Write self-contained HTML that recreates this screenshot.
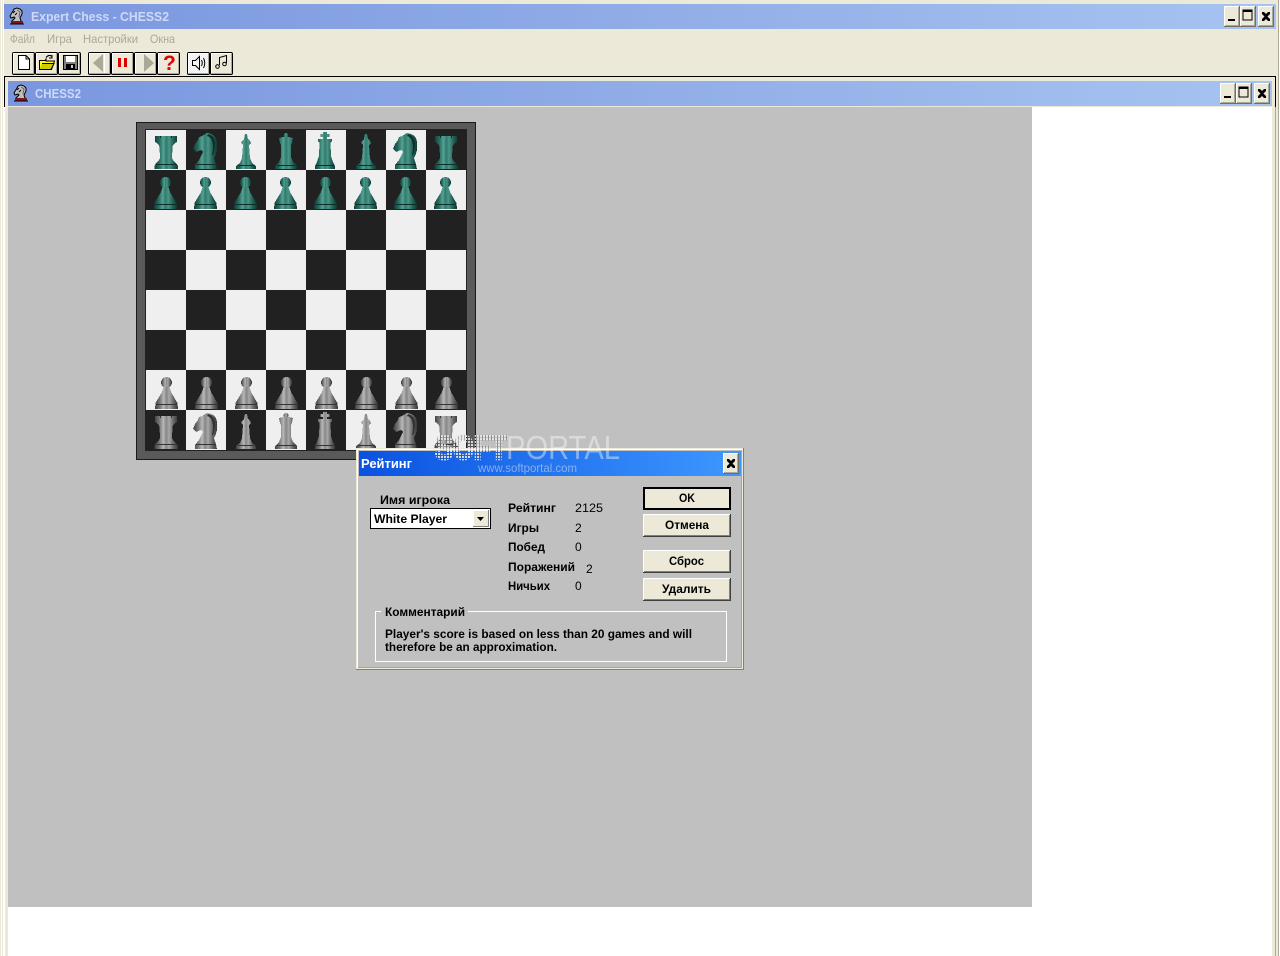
<!DOCTYPE html>
<html lang="ru"><head><meta charset="utf-8"><title>Expert Chess - CHESS2</title>
<style>
html,body{margin:0;padding:0;background:#fff;width:1280px;height:956px;overflow:hidden}
svg{display:block;position:absolute;left:0;top:0}
text{font-family:"Liberation Sans",sans-serif;font-size:12px;font-weight:bold;fill:#000;white-space:pre}
.m{font-weight:normal;fill:#aca899;font-size:12px}
.t{fill:#cdd9f6;font-size:13px}
.pc{shape-rendering:crispEdges}
</style></head><body>
<svg width="1280" height="956" viewBox="0 0 1280 956" xmlns="http://www.w3.org/2000/svg">
<defs>
<linearGradient id="tb"><stop offset="0" stop-color="#7a96df"/><stop offset="1" stop-color="#a6c4f0"/></linearGradient>
<linearGradient id="dlg"><stop offset="0" stop-color="#0a52e0"/><stop offset="1" stop-color="#3e98ff"/></linearGradient>
<linearGradient id="g"><stop offset="0" stop-color="#123f38"/><stop offset=".2" stop-color="#246a5e"/><stop offset=".38" stop-color="#55a294"/><stop offset=".5" stop-color="#2f7a6d"/><stop offset=".62" stop-color="#4c9586"/><stop offset=".82" stop-color="#205f54"/><stop offset="1" stop-color="#0f3a33"/></linearGradient>
<linearGradient id="s"><stop offset="0" stop-color="#404040"/><stop offset=".2" stop-color="#747474"/><stop offset=".38" stop-color="#b8b8b8"/><stop offset=".5" stop-color="#868686"/><stop offset=".62" stop-color="#a8a8a8"/><stop offset=".82" stop-color="#626262"/><stop offset="1" stop-color="#383838"/></linearGradient>
<pattern id="sq" width="80" height="80" patternUnits="userSpaceOnUse" x="146" y="130"><rect width="80" height="80" fill="#efefef"/><rect x="40" width="40" height="40" fill="#212121"/><rect y="40" width="40" height="40" fill="#212121"/></pattern>
<pattern id="dots" width="3" height="3" patternUnits="userSpaceOnUse"><rect width="2" height="2" fill="#e8e8e8" fill-opacity=".85"/><rect x="2" width="1" height="3" fill="#555" fill-opacity=".3"/></pattern>
<pattern id="dith" width="2" height="2" patternUnits="userSpaceOnUse"><rect width="2" height="2" fill="#ece9d8"/><rect width="1" height="1" fill="#fff"/><rect x="1" y="1" width="1" height="1" fill="#fff"/></pattern>

<g id="rook" class="pc"><path d="M9 6H31V12Q27 14 26.500 17L26 28Q27 31 30 33L32 36V39H8.500V36L10 33Q13 31 14 28L13.500 17Q13 14 9 12Z"/><rect x="14" y="6" width="1" height="2" fill="currentColor"/><rect x="25" y="6" width="1" height="2" fill="currentColor"/><rect x="10" y="34" width="21" height="1" fill="currentColor"/></g>
<g id="knight" class="pc"><path d="M21 3Q30 4 31 12Q32 22 28 28L30 34L31 39H9V35L13 30L17 22L15 20L10 22L7 19L9 14L12 10L13 7L16 6Z"/><path d="M22 4Q29 6 29 14Q29 20 27 25L26 25Q28 17 26 11Q25 7 21 6Z" fill="currentColor"/><rect x="10" y="34" width="20" height="1" fill="currentColor"/></g>
<g id="bishop" class="pc"><path d="M19 4H21L22 9L24 11L25 13L23 15L24 28L26 33L30 36V39H10V36L14 33L16 28L17 15L15 13L16 11L18 9Z"/><rect x="12" y="35" width="16" height="1" fill="currentColor"/></g>
<g id="queen" class="pc"><circle cx="20" cy="5.500" r="2.500"/><path d="M13 8L17 7H23L27 8L26 13L25 15V27L27 32L31 36V39H9V36L13 32L15 27V15L14 13Z"/><rect x="11" y="35" width="18" height="1" fill="currentColor"/></g>
<g id="king" class="pc"><path d="M17 2H21V4H23.500V7H21V9H26V11L24.500 13L25 26L27 32L29 36V39H9V36L11 32L13 26L13.500 13L12 11V9H17V7H14.500V4H17Z"/><rect x="10" y="35" width="18" height="1" fill="currentColor"/></g>
<g id="pawn" class="pc"><circle cx="19.500" cy="12.500" r="5.500"/><path d="M16.500 17H22.500L24 22L27.500 28L30.500 33L31 39H8L8.500 33L11.500 28L15 22Z"/><rect x="9" y="34" width="21" height="1" fill="currentColor"/></g>

<g id="b"><rect width="23" height="23" rx="2" fill="#000"/><rect x="1" y="1" width="21" height="21" fill="#aca899"/><rect x="1" y="1" width="20" height="20" fill="#fff"/><rect x="2" y="2" width="19" height="19" fill="#ece9d8"/></g>
<g id="w"><rect width="16" height="21" fill="#716f64"/><rect width="15" height="20" fill="#fff"/><rect x="1" y="1" width="14" height="19" fill="#aca899"/><rect x="1" y="1" width="13" height="18" fill="#ece9d8"/></g>
<g id="wmin"><use href="#w"/><rect x="4" y="13" width="7" height="2" fill="#000"/></g>
<g id="wmax"><use href="#w"/><rect x="3" y="4" width="9" height="10" fill="none" stroke="#000"/><rect x="3" y="4" width="9" height="2" fill="#000"/></g>
<g id="x"><path d="M4 0H6L8 2 10 0H12V2L9.500 4.500 12 7V9H10L8 7 6 9H4V7L6.500 4.500 4 2Z" fill="#000"/></g>
<g id="wcl"><use href="#w"/><use href="#x" y="6"/></g>
<g id="kn"><path d="M3 15V13L6 10 5 9 2 10 1 8 4 3 5 1 8 0 11 1 13 3 13 6 11 10 12 13 13 15Z" fill="#c0c0c0" stroke="#000" stroke-width="1"/><path d="M8 2L11 4 10 9" stroke="#606060" fill="none"/><path d="M6 3L4 5M8 5L6 7" stroke="#000" fill="none"/><rect x="2" y="13" width="12" height="3" fill="#7a1820"/><rect x="1" y="15.500" width="14" height="1" fill="#000"/></g>
<g id="dbtn"><rect width="88" height="23" fill="#404040"/><rect width="87" height="22" fill="#fff"/><rect x="1" y="1" width="86" height="21" fill="#808080"/><rect x="1" y="1" width="85" height="20" fill="#ece9d8"/></g>
</defs>

<!-- outer window frame -->
<rect width="1280" height="956" fill="#ece9d8"/>
<rect x="1279" width="1" height="956" fill="#fff"/>
<rect x="1278" width="1" height="956" fill="#aca899"/>
<rect x="1" y="0" width="1" height="956" fill="#fff"/>
<rect x="3" y="0" width="1" height="956" fill="#fff"/>
<rect x="4" y="4" width="1272" height="25" fill="url(#tb)"/>
<use href="#kn" x="9" y="8"/>
<text class="t" x="31" y="21" textLength="138" lengthAdjust="spacingAndGlyphs">Expert Chess - CHESS2</text>
<use href="#wmin" x="1224" y="6"/><use href="#wmax" x="1240" y="6"/><use href="#wcl" x="1258" y="6"/>

<!-- menu -->
<text class="m" x="10" y="43" textLength="25" lengthAdjust="spacingAndGlyphs">Файл</text>
<text class="m" x="47" y="43" textLength="25" lengthAdjust="spacingAndGlyphs">Игра</text>
<text class="m" x="83" y="43" textLength="55" lengthAdjust="spacingAndGlyphs">Настройки</text>
<text class="m" x="150" y="43" textLength="25" lengthAdjust="spacingAndGlyphs">Окна</text>

<!-- toolbar -->
<use href="#b" x="12" y="52"/><use href="#b" x="35" y="52"/><use href="#b" x="58" y="52"/>
<use href="#b" x="88" y="52"/><use href="#b" x="111" y="52"/><use href="#b" x="134" y="52"/><use href="#b" x="157" y="52"/>
<use href="#b" x="187" y="52"/><use href="#b" x="210" y="52"/>
<rect x="189" y="54" width="19" height="19" fill="url(#dith)"/>
<!-- new -->
<path d="M18.500 55.500H26L29.500 59V69.500H18.500Z" fill="#fff" stroke="#000"/><path d="M26 55.500V59H29.500" fill="none" stroke="#000"/>
<!-- open -->
<path d="M39.500 60.500H45L46 59V61H54.500L51.500 69.500H39.500Z" fill="#ffff00" stroke="#000"/><path d="M42 63.500H54L51 69.500H39.500" fill="#cccc00" stroke="#000"/><path d="M46 57.500Q49 54 52 56.500M52 55V58H49" fill="none" stroke="#000"/>
<!-- save -->
<rect x="63.500" y="55.500" width="14" height="14" fill="#808080" stroke="#000"/><rect x="66" y="56" width="9" height="6" fill="#fff"/><rect x="66" y="64" width="9" height="5" fill="#000"/><rect x="71" y="65" width="2" height="3" fill="#ccc"/>
<!-- back / pause / forward / help -->
<path d="M93 63L103 54V72Z" fill="#aca899"/><rect x="104" y="54" width="1" height="19" fill="#fff"/>
<rect x="118" y="58" width="3" height="9" fill="#e00000"/><rect x="124" y="58" width="3" height="9" fill="#e00000"/>
<path d="M154 63L144 54V72Z" fill="#aca899"/>
<text x="163" y="70" style="font-size:21px;fill:#e00000">?</text>
<!-- speaker -->
<path d="M192.500 60.500H195.500L199.500 56.500V69.500L195.500 65.500H192.500Z" fill="none" stroke="#000"/><path d="M201.500 60Q203 63 201.500 66M203.500 58Q206 63 203.500 68" fill="none" stroke="#000"/>
<!-- note -->
<path d="M219.500 65V57.500L226.500 55.500V63" fill="none" stroke="#000"/><circle cx="217.500" cy="66.500" r="1.800" fill="none" stroke="#000"/><circle cx="224.500" cy="64" r="1.800" fill="none" stroke="#000"/>

<!-- MDI area -->
<rect x="4" y="76" width="1272" height="880" fill="#fff"/>
<rect x="4" y="76" width="1272" height="1" fill="#000"/>
<rect x="4" y="76" width="1" height="31" fill="#000"/>
<rect x="1275" y="76" width="1" height="31" fill="#000"/>
<rect x="1275" y="107" width="1" height="849" fill="#aca899"/>
<rect x="5" y="77" width="1270" height="4" fill="#ece9d8"/>
<rect x="5" y="77" width="3" height="879" fill="#ece9d8"/>
<rect x="1272" y="77" width="3" height="879" fill="#ece9d8"/>
<rect x="8" y="81" width="1264" height="26" fill="url(#tb)"/>
<rect x="8" y="106" width="1264" height="1" fill="#ece9d8"/>
<use href="#kn" x="13" y="85"/>
<text class="t" x="35" y="98" textLength="46" lengthAdjust="spacingAndGlyphs">CHESS2</text>
<use href="#wmin" x="1220" y="83"/><use href="#wmax" x="1236" y="83"/><use href="#wcl" x="1254" y="83"/>
<rect x="8" y="107" width="1024" height="800" fill="#c0c0c0"/>

<!-- board -->
<rect x="136.500" y="122.500" width="339" height="337" fill="#5a5a5a" stroke="#1a1a1a"/>
<rect x="145" y="129" width="322" height="322" fill="#222"/>
<rect x="146" y="130" width="320" height="320" fill="url(#sq)"/>
<g fill="url(#g)" color="#0c302a">
<use href="#rook" x="146" y="130"/><use href="#knight" x="186" y="130"/><use href="#bishop" x="226" y="130"/><use href="#queen" x="266" y="130"/><use href="#king" x="306" y="130"/><use href="#bishop" x="346" y="130"/><use href="#knight" x="386" y="130"/><use href="#rook" x="426" y="130"/>
<use href="#pawn" x="146" y="170"/><use href="#pawn" x="186" y="170"/><use href="#pawn" x="226" y="170"/><use href="#pawn" x="266" y="170"/><use href="#pawn" x="306" y="170"/><use href="#pawn" x="346" y="170"/><use href="#pawn" x="386" y="170"/><use href="#pawn" x="426" y="170"/>
</g>
<g fill="url(#s)" color="#333">
<use href="#pawn" x="147" y="370"/><use href="#pawn" x="187" y="370"/><use href="#pawn" x="227" y="370"/><use href="#pawn" x="267" y="370"/><use href="#pawn" x="307" y="370"/><use href="#pawn" x="347" y="370"/><use href="#pawn" x="387" y="370"/><use href="#pawn" x="427" y="370"/>
<use href="#rook" x="146" y="410"/><use href="#knight" x="186" y="410"/><use href="#bishop" x="226" y="410"/><use href="#queen" x="266" y="410"/><use href="#king" x="306" y="410"/><use href="#bishop" x="346" y="410"/><use href="#knight" x="386" y="410"/><use href="#rook" x="426" y="410"/>
</g>

<!-- dialog -->
<rect x="356" y="448" width="388" height="222" fill="#808080"/>
<rect x="356" y="448" width="387" height="221" fill="#ece9d8"/>
<rect x="357" y="449" width="385" height="219" fill="#fff"/>
<rect x="358" y="450" width="384" height="218" fill="#aca899"/>
<rect x="358" y="450" width="383" height="217" fill="#c0c0c0"/>
<rect x="359" y="451" width="382" height="25" fill="url(#dlg)"/>
<text x="361" y="468" style="fill:#fff;font-size:13px" textLength="51" lengthAdjust="spacingAndGlyphs">Рейтинг</text>
<g transform="translate(723,453)"><rect width="16" height="21" fill="#716f64"/><rect width="15" height="20" fill="#fff"/><rect x="1" y="1" width="14" height="19" fill="#aca899"/><rect x="1" y="1" width="13" height="18" fill="#ece9d8"/><use href="#x" y="6"/></g>

<text x="380" y="504" textLength="70" lengthAdjust="spacingAndGlyphs">Имя игрока</text>
<rect x="370.500" y="508.500" width="120" height="20" fill="#fff" stroke="#000"/>
<text x="374" y="523" textLength="73" lengthAdjust="spacingAndGlyphs">White Player</text>
<rect x="473" y="510" width="16" height="17" fill="#808080"/><rect x="473" y="510" width="15" height="16" fill="#fff"/><rect x="474" y="511" width="14" height="15" fill="#ece9d8"/>
<path d="M477 517H484L480.500 521Z" fill="#000"/>

<text x="508" y="512" textLength="48" lengthAdjust="spacingAndGlyphs">Рейтинг</text><text x="575" y="512" style="font-weight:normal" textLength="28" lengthAdjust="spacingAndGlyphs">2125</text>
<text x="508" y="532" textLength="31" lengthAdjust="spacingAndGlyphs">Игры</text><text x="575" y="532" style="font-weight:normal">2</text>
<text x="508" y="551" textLength="37" lengthAdjust="spacingAndGlyphs">Побед</text><text x="575" y="551" style="font-weight:normal">0</text>
<text x="508" y="571" textLength="67" lengthAdjust="spacingAndGlyphs">Поражений</text><text x="586" y="573" style="font-weight:normal">2</text>
<text x="508" y="590" textLength="42" lengthAdjust="spacingAndGlyphs">Ничьих</text><text x="575" y="590" style="font-weight:normal">0</text>

<rect x="643" y="487" width="88" height="23" fill="#000"/><rect x="644" y="488" width="86" height="21" fill="#000"/><rect x="645" y="489" width="84" height="19" fill="#ece9d8"/>
<use href="#dbtn" x="643" y="514"/>
<use href="#dbtn" x="643" y="550"/>
<use href="#dbtn" x="643" y="578"/>
<text x="679" y="502" textLength="16" lengthAdjust="spacingAndGlyphs">OK</text>
<text x="665" y="529" textLength="44" lengthAdjust="spacingAndGlyphs">Отмена</text>
<text x="669" y="565" textLength="35" lengthAdjust="spacingAndGlyphs">Сброс</text>
<text x="662" y="593" textLength="49" lengthAdjust="spacingAndGlyphs">Удалить</text>

<rect x="375.500" y="611.500" width="351" height="50" fill="none" stroke="#fff"/>
<rect x="381" y="606" width="87" height="10" fill="#c0c0c0"/>
<text x="385" y="616" textLength="80" lengthAdjust="spacingAndGlyphs">Комментарий</text>
<text x="385" y="638" textLength="307" lengthAdjust="spacingAndGlyphs">Player's score is based on less than 20 games and will</text>
<text x="385" y="651" textLength="172" lengthAdjust="spacingAndGlyphs">therefore be an approximation.</text>

<!-- watermark -->
<text x="435" y="459" style="font-size:33px;fill:url(#dots);stroke:url(#dots);stroke-width:2.500" textLength="72" lengthAdjust="spacingAndGlyphs">SOFT</text>
<text x="506" y="459" style="font-size:33px;font-weight:normal;fill:#fff;fill-opacity:.42" textLength="114" lengthAdjust="spacingAndGlyphs">PORTAL</text>
<text x="478" y="472" style="font-size:12px;font-weight:normal;fill:#cfd8e8;fill-opacity:.6" textLength="99" lengthAdjust="spacingAndGlyphs">www.softportal.com</text>
</svg>
</body></html>
